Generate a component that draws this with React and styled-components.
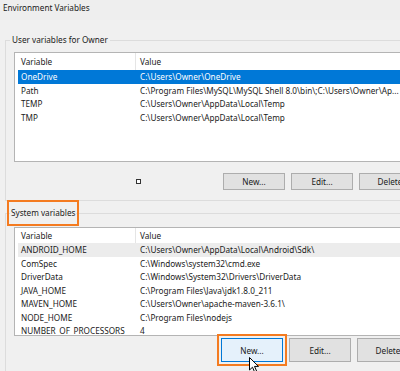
import React from "react";
import styled, { createGlobalStyle, css } from "styled-components";

const GlobalStyle = createGlobalStyle`
  html, body {
    margin: 0;
    padding: 0;
    background: #f0f0f0;
  }
  body {
    font-family: "Segoe UI", "Noto Sans", sans-serif;
    font-size: 8.2px;
    color: #1a1a1a;
  }
`;

const Window = styled.div`
  position: relative;
  width: 400px;
  height: 371px;
  overflow: hidden;
  background: #f0f0f0;
`;

const TitleBar = styled.div`
  height: 20px;
  padding-left: 3px;
  line-height: 15px;
  background: #eeeeee;
`;

const Group = styled.fieldset`
  width: 420px;
  margin: ${(p) => p.$top}px 0 0 5px;
  padding: ${(p) => p.$pt}px 0 ${(p) => p.$pb}px 8px;
  border: 1px solid #dcdcdc;
  border-right: none;
  min-width: 0;
`;

const Legend = styled.legend`
  margin-left: -4px;
  padding: 0 2px;
  line-height: 12px;
  ${(p) =>
    p.$highlight &&
    css`
      padding: 4px 1px;
      outline: 2px solid #f47b20;
      outline-offset: 1px;
    `}
`;

const List = styled.div`
  height: ${(p) => p.$h}px;
  box-sizing: border-box;
  border: 1px solid #b4b4b4;
  border-right: none;
  background: #ffffff;
  overflow: hidden;
`;

const Header = styled.div`
  display: grid;
  grid-template-columns: 121px 1fr;
  height: ${(p) => p.$h}px;
  align-items: stretch;
`;

const HeaderCell = styled.div`
  display: flex;
  align-items: center;
  padding-left: ${(p) => (p.$first ? 6 : 4)}px;
  border-right: ${(p) => (p.$first ? "1px solid #e5e5e5" : "none")};
  white-space: nowrap;
`;

const Row = styled.div`
  display: grid;
  grid-template-columns: 118px 1fr;
  height: 13.5px;
  line-height: 13.5px;
  margin-left: 3px;
  white-space: nowrap;
  background: ${(p) => (p.$selected ? "#0078d7" : p.$hover ? "#ececec" : "transparent")};
  color: ${(p) => (p.$selected ? "#ffffff" : "inherit")};
`;

const Cell = styled.div`
  padding-left: ${(p) => (p.$first ? 3 : 4)}px;
  overflow: hidden;
`;

const ButtonRow = styled.div`
  display: flex;
  align-items: center;
  gap: 6px;
  margin-top: ${(p) => p.$top}px;
  padding-left: ${(p) => p.$left}px;
`;

const Grip = styled.span`
  width: 3px;
  height: 3px;
  margin-right: 76px;
  border: 1px solid #333;
  background: #fff;
`;

const Button = styled.button`
  width: 62px;
  height: ${(p) => p.$h}px;
  padding: 0;
  border: 1px solid #adadad;
  background: #e1e1e1;
  font: inherit;
  color: #1a1a1a;
  flex-shrink: 0;
  ${(p) =>
    p.$active &&
    css`
      border-color: #0078d7;
      background: #e5f1fb;
      outline: 2px solid #f47b20;
      outline-offset: 2px;
    `}
`;

const Pointer = styled.svg`
  position: absolute;
  left: 249px;
  top: 357px;
`;

const userVars = [
  ["OneDrive", "C:\\Users\\Owner\\OneDrive"],
  ["Path", "C:\\Program Files\\MySQL\\MySQL Shell 8.0\\bin\\;C:\\Users\\Owner\\Ap..."],
  ["TEMP", "C:\\Users\\Owner\\AppData\\Local\\Temp"],
  ["TMP", "C:\\Users\\Owner\\AppData\\Local\\Temp"],
];

const systemVars = [
  ["ANDROID_HOME", "C:\\Users\\Owner\\AppData\\Local\\Android\\Sdk\\"],
  ["ComSpec", "C:\\Windows\\system32\\cmd.exe"],
  ["DriverData", "C:\\Windows\\System32\\Drivers\\DriverData"],
  ["JAVA_HOME", "C:\\Program Files\\Java\\jdk1.8.0_211"],
  ["MAVEN_HOME", "C:\\Users\\Owner\\apache-maven-3.6.1\\"],
  ["NODE_HOME", "C:\\Program Files\\nodejs"],
  ["NUMBER_OF_PROCESSORS", "4"],
];

function VarList({ h, headerH, rows, selected, hover }) {
  return (
    <List $h={h}>
      <Header $h={headerH}>
        <HeaderCell $first>Variable</HeaderCell>
        <HeaderCell>Value</HeaderCell>
      </Header>
      {rows.map(([name, value], i) => (
        <Row key={name} $selected={i === selected} $hover={i === hover}>
          <Cell $first>{name}</Cell>
          <Cell>{value}</Cell>
        </Row>
      ))}
    </List>
  );
}

export default function App() {
  return (
    <Window>
      <GlobalStyle />
      <TitleBar>Environment Variables</TitleBar>

      <Group $top={14} $pt={6} $pb={10}>
        <Legend>User variables for Owner</Legend>
        <VarList h={110} headerH={17} rows={userVars} selected={0} />
        <ButtonRow $top={11} $left={122}>
          <Grip />
          <Button $h={17}>New...</Button>
          <Button $h={17}>Edit...</Button>
          <Button $h={17}>Delete</Button>
        </ButtonRow>
      </Group>

      <Group $top={2} $pt={4} $pb={10}>
        <Legend $highlight>System variables</Legend>
        <VarList h={109} headerH={15} rows={systemVars} hover={0} />
        <ButtonRow $top={2} $left={207}>
          <Button $h={24} $active>New...</Button>
          <Button $h={24}>Edit...</Button>
          <Button $h={24}>Delete</Button>
        </ButtonRow>
      </Group>

      <Pointer width="11" height="16" viewBox="0 0 11 16">
        <path d="M0.5 0.5 L0.5 13 L3.5 10.2 L5.6 15 L7.6 14.1 L5.5 9.4 L9.5 9.4 Z" fill="#fff" stroke="#000" strokeWidth="1" strokeLinejoin="round" />
      </Pointer>
    </Window>
  );
}
